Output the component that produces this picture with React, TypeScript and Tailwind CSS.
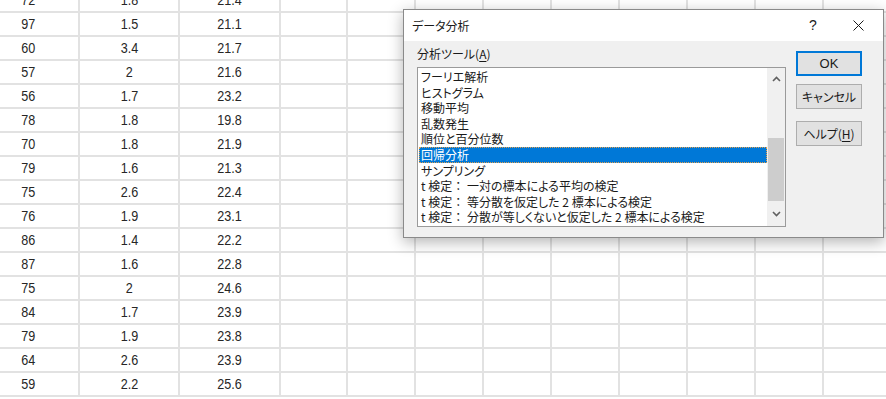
const rows: [string, string, string][] = [
  ["72", "1.8", "21.4"],
  ["97", "1.5", "21.1"],
  ["60", "3.4", "21.7"],
  ["57", "2", "21.6"],
  ["56", "1.7", "23.2"],
  ["78", "1.8", "19.8"],
  ["70", "1.8", "21.9"],
  ["79", "1.6", "21.3"],
  ["75", "2.6", "22.4"],
  ["76", "1.9", "23.1"],
  ["86", "1.4", "22.2"],
  ["87", "1.6", "22.8"],
  ["75", "2", "24.6"],
  ["84", "1.7", "23.9"],
  ["79", "1.9", "23.8"],
  ["64", "2.6", "23.9"],
  ["59", "2.2", "25.6"],
];

const tools = [
  "フーリエ解析",
  "ヒストグラム",
  "移動平均",
  "乱数発生",
  "順位と百分位数",
  "回帰分析",
  "サンプリング",
  "t 検定：一対の標本による平均の検定",
  "t 検定：等分散を仮定した 2 標本による検定",
  "t 検定：分散が等しくないと仮定した 2 標本による検定",
];

const jp = "font-['Noto_Sans_CJK_JP',sans-serif] [font-feature-settings:'palt']";

function Sheet() {
  return (
    <div className="-mt-[11px] -ml-[21px] font-['Liberation_Sans',sans-serif] text-[15px] text-[#262626]">
      {rows.map((r, i) => (
        <div
          key={i}
          className="grid h-[24px] grid-cols-[101px_100px_101px_67px_68px_68px_68px_68px_68px_68px_68px_68px_68px] border-b-2 border-[#e2e2e2]"
        >
          {r.map((v, j) => (
            <div key={j} className="flex items-center justify-center border-r-2 border-[#e2e2e2]">
              <span className="inline-block scale-x-[0.84]">{v}</span>
            </div>
          ))}
          {Array.from({ length: 10 }).map((_, j) => (
            <div key={"e" + j} className="border-r-2 border-[#e2e2e2]" />
          ))}
        </div>
      ))}
    </div>
  );
}

function Btn({ children, focus }: { children: React.ReactNode; focus?: boolean }) {
  return (
    <div
      className={
        "flex h-[25px] w-[66px] items-center justify-center bg-[#e1e1e1] text-[12px] text-[#1a1a1a] " +
        (focus ? "border-2 border-[#0078d7]" : "border border-[#adadad]")
      }
    >
      {children}
    </div>
  );
}

function ToolLabel({ text }: { text: string }) {
  const k = text.indexOf("：");
  if (k < 0) return <>{text}</>;
  return (
    <>
      {text.slice(0, k)}
      <span className="[font-feature-settings:normal]">：</span> {text.slice(k + 1)}
    </>
  );
}

function Dialog() {
  return (
    <div
      className={`absolute left-[403px] top-[9px] flex h-[229px] w-[481px] flex-col border border-[#8a8a8a] bg-[#f0f0f0] text-[12px] text-[#1a1a1a] shadow-[0_4px_14px_rgba(0,0,0,0.3)] ${jp}`}
    >
      <div className="flex h-[31px] items-center bg-white pl-[8px]">
        <span>データ分析</span>
        <span className="ml-auto w-[14px] text-center text-[14px] font-['Liberation_Sans',sans-serif]">?</span>
        <svg className="ml-[33px] mr-[19px]" width="11" height="11" viewBox="0 0 11 11">
          <path d="M0.5 0.5 L10.5 10.5 M10.5 0.5 L0.5 10.5" stroke="#1a1a1a" strokeWidth="1" />
        </svg>
      </div>
      <div className="flex flex-1 pl-[13px] pr-[21px]">
        <div className="flex w-[369px] flex-col">
          <div className="mt-[5px] h-[16px] leading-[16px]">
            分析ツール(<span className="underline underline-offset-2">A</span>)
          </div>
          <div className="mt-[5px] flex h-[160px] border border-[#9a9a9a] bg-white">
            <div className="flex-1 pl-[1px] pt-[1px]">
              {tools.map((t, i) => (
                <div
                  key={i}
                  className={
                    "h-[15.6px] whitespace-pre pl-[2px] leading-[15.6px] " +
                    (i === 5 ? "bg-[#0078d7] text-white outline outline-1 -outline-offset-1 outline-dotted outline-[#e0a050]" : "")
                  }
                >
                  <ToolLabel text={t} />
                </div>
              ))}
            </div>
            <div className="flex w-[18px] flex-col items-center bg-[#f0f0f0]">
              <svg className="mt-[8px]" width="9" height="6" viewBox="0 0 9 6">
                <path d="M1 5 L4.5 1.5 L8 5" stroke="#606060" strokeWidth="1.6" fill="none" />
              </svg>
              <div className="mt-[56px] h-[63px] w-[16px] bg-[#cdcdcd]" />
              <svg className="mt-[10px]" width="9" height="6" viewBox="0 0 9 6">
                <path d="M1 1 L4.5 4.5 L8 1" stroke="#606060" strokeWidth="1.6" fill="none" />
              </svg>
            </div>
          </div>
        </div>
        <div className="ml-[10px] mt-[10px] flex flex-col">
          <Btn focus>
            <span className="font-['Liberation_Sans',sans-serif] text-[13px]">OK</span>
          </Btn>
          <div className="mt-[8px]">
            <Btn>キャンセル</Btn>
          </div>
          <div className="mt-[12px]">
            <Btn>
              ヘルプ(<span className="underline underline-offset-2">H</span>)
            </Btn>
          </div>
        </div>
      </div>
    </div>
  );
}

export default function App() {
  return (
    <div className="relative h-[399px] w-[886px] overflow-hidden bg-white">
      <Sheet />
      <Dialog />
    </div>
  );
}
